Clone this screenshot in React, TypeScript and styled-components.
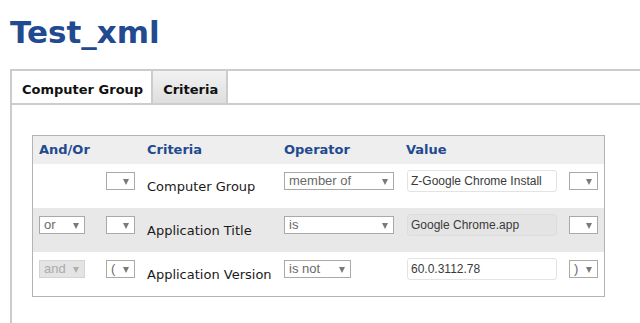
import React from "react";
import styled, { createGlobalStyle } from "styled-components";

const GlobalStyle = createGlobalStyle`
  html, body {
    margin: 0;
    padding: 0;
    overflow: hidden;
    background: #ffffff;
    font-family: "DejaVu Sans", Verdana, sans-serif;
  }
`;

const Page = styled.div`
  padding-left: 10px;
`;

const Title = styled.h1`
  margin: 14px 0 19px 0;
  font-size: 31px;
  font-weight: bold;
  color: #224a91;
  line-height: 36px;
`;

const TabBox = styled.div`
  border-top: 2px solid #cccccc;
  border-left: 2px solid #cccccc;
`;

const TabBar = styled.div`
  display: flex;
  height: 32px;
  border-bottom: 2px solid #cccccc;
`;

const Tab = styled.div<{ $active?: boolean }>`
  padding: 11px 8px 0 10px;
  height: 32px;
  box-sizing: border-box;
  line-height: 15px;
  font-size: 13px;
  font-weight: bold;
  color: #111;
  border-right: 2px solid #cccccc;
  background: ${(p) => (p.$active ? "#ffffff" : "linear-gradient(#f2f2f2, #dedede)")};
`;

const Panel = styled.div`
  padding: 30px 20px 40px 20px;
`;

const Table = styled.div`
  width: 573px;
  box-sizing: border-box;
  border: 1px solid #b4b4b4;
`;

const Row = styled.div<{ $bg?: string }>`
  display: grid;
  grid-template-columns: 67px 41px 137px 122px 163px 41px;
  height: 44px;
  background: ${(p) => p.$bg || "#ffffff"};
`;

const HeadRow = styled(Row)`
  height: 28px;
  background: #eeeeee;
`;

const HeadCell = styled.div`
  padding: 6px 0 0 6px;
  line-height: 15px;
  font-size: 13px;
  font-weight: bold;
  color: #1f4a8f;
`;

const SelectCell = styled.div`
  padding: 8px 0 0 6px;
`;

const TextCell = styled.div`
  padding: 15px 0 0 6px;
  line-height: 15px;
  font-size: 13px;
  color: #1a1a1a;
  white-space: nowrap;
`;

const InputCell = styled.div`
  padding: 6px 0 0 7px;
`;

const Select = styled.div<{ $w: number; $disabled?: boolean }>`
  display: flex;
  align-items: center;
  justify-content: space-between;
  width: ${(p) => p.$w}px;
  height: 18px;
  box-sizing: border-box;
  padding: 0 5px 0 4px;
  border: 1px solid ${(p) => (p.$disabled ? "#d4d4d4" : "#a9a9a9")};
  background: ${(p) => (p.$disabled ? "#e4e4e4" : "#ffffff")};
  color: ${(p) => (p.$disabled ? "#aaaaaa" : "#6a6a6a")};
  font-family: "Liberation Sans", Arial, sans-serif;
  font-size: 13px;
  line-height: 16px;
`;

const Arrow = styled.span<{ $disabled?: boolean }>`
  width: 0;
  height: 0;
  border-left: 3.5px solid transparent;
  border-right: 3.5px solid transparent;
  border-top: 6px solid ${(p) => (p.$disabled ? "#b0b0b0" : "#7a7a7a")};
  margin-top: 1px;
`;

const Input = styled.div<{ $readonly?: boolean }>`
  width: 150px;
  height: 22px;
  box-sizing: border-box;
  padding: 0 3px;
  border: 1px solid ${(p) => (p.$readonly ? "#dddddd" : "#e3e3e3")};
  border-radius: 3px;
  background: ${(p) => (p.$readonly ? "#e4e4e4" : "#ffffff")};
  color: #3a3a3a;
  font-family: "Liberation Sans", Arial, sans-serif;
  font-size: 12px;
  line-height: 20px;
  white-space: nowrap;
  overflow: hidden;
`;

interface Criterion {
  andOr?: string;
  andOrDisabled?: boolean;
  open: string;
  name: string;
  operator: string;
  opWidth: number;
  value: string;
  readonly?: boolean;
  close: string;
  bg: string;
}

const rows: Criterion[] = [
  { open: "", name: "Computer Group", operator: "member of", opWidth: 110, value: "Z-Google Chrome Install", close: "", bg: "#ffffff" },
  { andOr: "or", open: "", name: "Application Title", operator: "is", opWidth: 110, value: "Google Chrome.app", readonly: true, close: "", bg: "#e8e8e8" },
  { andOr: "and", andOrDisabled: true, open: "(", name: "Application Version", operator: "is not", opWidth: 67, value: "60.0.3112.78", close: ")", bg: "#ffffff" },
];

function Dropdown({ w, text, disabled }: { w: number; text: string; disabled?: boolean }) {
  return (
    <Select $w={w} $disabled={disabled}>
      <span>{text}</span>
      <Arrow $disabled={disabled} />
    </Select>
  );
}

export default function App() {
  return (
    <Page>
      <GlobalStyle />
      <Title>Test_xml</Title>
      <TabBox>
        <TabBar>
          <Tab $active>Computer Group</Tab>
          <Tab>Criteria</Tab>
        </TabBar>
        <Panel>
          <Table>
            <HeadRow>
              <HeadCell>And/Or</HeadCell>
              <HeadCell />
              <HeadCell>Criteria</HeadCell>
              <HeadCell>Operator</HeadCell>
              <HeadCell>Value</HeadCell>
              <HeadCell />
            </HeadRow>
            {rows.map((r) => (
              <Row key={r.name} $bg={r.bg}>
                <SelectCell>
                  {r.andOr && <Dropdown w={46} text={r.andOr} disabled={r.andOrDisabled} />}
                </SelectCell>
                <SelectCell>
                  <Dropdown w={29} text={r.open} />
                </SelectCell>
                <TextCell>{r.name}</TextCell>
                <SelectCell>
                  <Dropdown w={r.opWidth} text={r.operator} />
                </SelectCell>
                <InputCell>
                  <Input $readonly={r.readonly}>{r.value}</Input>
                </InputCell>
                <SelectCell>
                  <Dropdown w={29} text={r.close} />
                </SelectCell>
              </Row>
            ))}
          </Table>
        </Panel>
      </TabBox>
    </Page>
  );
}
